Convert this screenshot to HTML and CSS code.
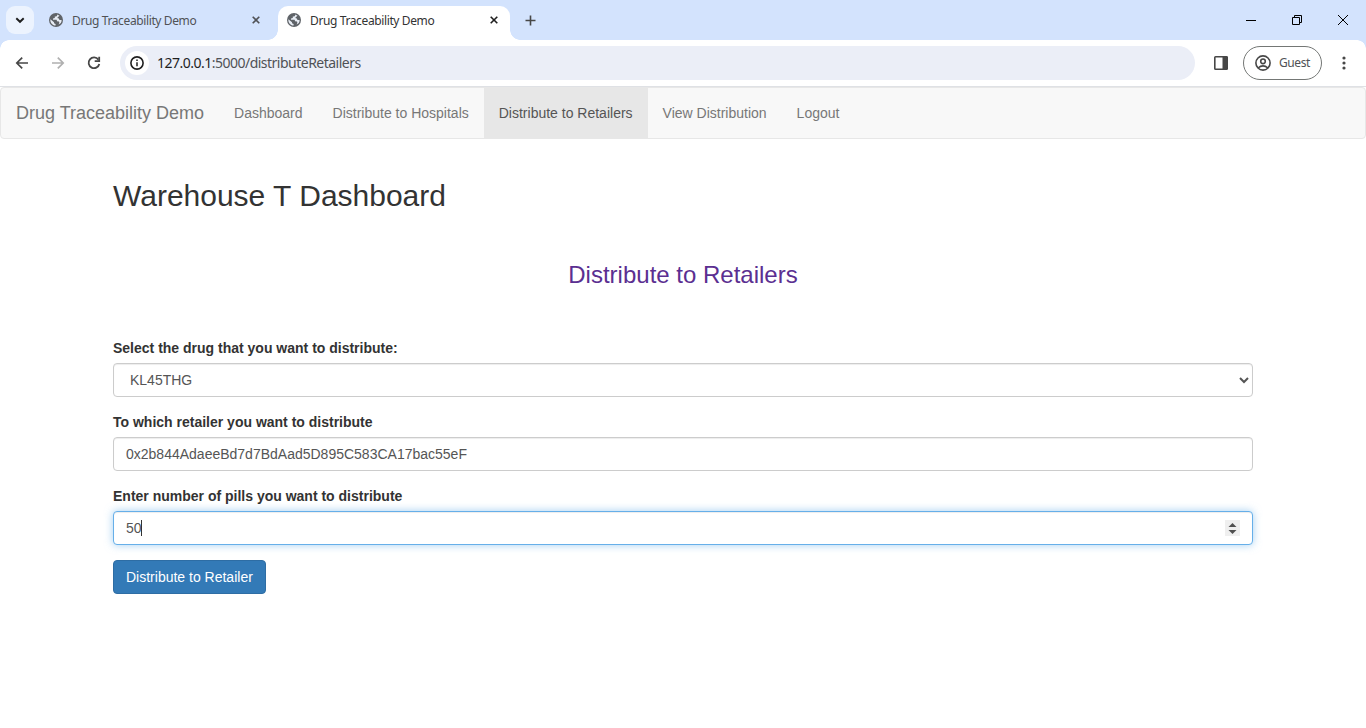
FILE: index.html
```html
<!DOCTYPE html>
<html lang="en">
<head>
<meta charset="utf-8">
<title>Drug Traceability Demo</title>
<link rel="stylesheet" href="styles.css">
</head>
<body>
<svg class="defs" width="0" height="0">
  <symbol id="globe" viewBox="0 0 14 14">
    <circle cx="7" cy="7" r="7" fill="#5f6368"/>
    <path d="M8.2 1.5 C8.5 3.2 7.2 3.5 5.8 3.6 V5.1 L4 5.5 V6.7 H7.2 C8 6.7 7.8 7.4 8 8.3 L10 8.5 L10.4 10 L9.5 11.6 C11.8 10.7 12.8 8.6 12.6 6.9 L10.5 7 L9.8 5.4 L8.2 5 L9.3 3.7 L10.5 2.7 Z" fill="#e8edf5"/>
    <path d="M1.4 6.2 L5 9.2 V10.3 L6.6 10.9 V12.6 C3.2 12.3 .9 9.2 1.4 6.2 Z" fill="#e8edf5"/>
  </symbol>
  <symbol id="close" viewBox="0 0 8 8"><path d="M.7 .7 L7.3 7.3 M7.3 .7 L.7 7.3" stroke="currentColor" stroke-width="1.6"/></symbol>
</svg>
<div class="tabstrip">
  <div class="tab-search"><svg width="28" height="28" viewBox="0 0 28 28"><path d="M10.3 12.2 L14 15.8 L17.7 12.2" fill="none" stroke="#1f1f1f" stroke-width="1.9"/></svg></div>
  <div class="tab">
    <svg class="favicon" width="14" height="14"><use href="#globe"/></svg>
    <span class="tab-title">Drug Traceability Demo</span>
    <svg class="tab-close" width="8" height="8"><use href="#close"/></svg>
  </div>
  <div class="tab active">
    <svg class="favicon" width="14" height="14"><use href="#globe"/></svg>
    <span class="tab-title">Drug Traceability Demo</span>
    <svg class="tab-close" width="8" height="8"><use href="#close"/></svg>
  </div>
  <svg class="new-tab" width="11" height="11" viewBox="0 0 11 11"><path d="M5.5 .5 V10.5 M.5 5.5 H10.5" stroke="#474747" stroke-width="1.6"/></svg>
  <div class="window-controls">
    <svg width="10" height="10" viewBox="0 0 10 10"><path d="M0 5.5 H10" stroke="#000"/></svg>
    <svg width="10" height="10" viewBox="0 0 10 10"><path d="M.5 2.5 H7.5 V9.5 H.5 Z M2.5 2.5 V.5 H9.5 V7.5 H7.5" fill="none" stroke="#000"/></svg>
    <svg width="10" height="10" viewBox="0 0 10 10"><path d="M0 0 L10 10 M10 0 L0 10" stroke="#000"/></svg>
  </div>
</div>
<div class="toolbar">
  <svg class="nav-icon" width="14" height="14" viewBox="0 0 14 14"><path d="M13 7 H2 M7.2 1.6 L1.8 7 L7.2 12.4" fill="none" stroke="#474747" stroke-width="1.7"/></svg>
  <svg class="nav-icon" width="14" height="14" viewBox="0 0 14 14"><path d="M1 7 H12 M6.8 1.6 L12.2 7 L6.8 12.4" fill="none" stroke="#b0b0b0" stroke-width="1.7"/></svg>
  <svg class="nav-icon" width="14" height="14" viewBox="0 0 14 14"><path d="M11.4 3.6 A5.4 5.4 0 1 0 12.3 8" fill="none" stroke="#474747" stroke-width="1.8"/><path d="M12.2 .8 V5.2 H7.7" fill="none" stroke="#474747" stroke-width="1.8"/></svg>
  <div class="address">
    <span class="site-info"><svg width="14" height="14" viewBox="0 0 14 14"><circle cx="7" cy="7" r="6.1" fill="none" stroke="#1f1f1f" stroke-width="1.6"/><path d="M7 6.2 V10.3 M7 3.6 V5.1" stroke="#1f1f1f" stroke-width="1.5"/></svg></span>
    <span class="url"><span class="host">127.0.0.1</span>:5000/distributeRetailers</span>
  </div>
  <svg class="side-panel" width="14" height="14" viewBox="0 0 14 14"><rect x=".8" y=".8" width="12.6" height="12.4" rx=".8" fill="#fff" stroke="#474747" stroke-width="1.6"/><path d="M8.5 1 H13.3 V13 H8.5 Z" fill="#474747"/></svg>
  <div class="profile">
    <svg width="16" height="16" viewBox="0 0 16 16"><g fill="none" stroke="#474747" stroke-width="1.6"><circle cx="8" cy="8" r="7.1"/><circle cx="8" cy="6.3" r="2.3"/><path d="M3 13 Q8 8.6 13 13"/></g></svg>
    <span>Guest</span>
  </div>
  <svg class="menu" width="4" height="14" viewBox="0 0 4 14"><g fill="#474747"><circle cx="2" cy="2" r="1.6"/><circle cx="2" cy="7" r="1.6"/><circle cx="2" cy="12" r="1.6"/></g></svg>
</div>
<nav class="navbar">
  <a class="brand">Drug Traceability Demo</a>
  <a class="nav-link">Dashboard</a>
  <a class="nav-link">Distribute to Hospitals</a>
  <a class="nav-link current">Distribute to Retailers</a>
  <a class="nav-link">View Distribution</a>
  <a class="nav-link">Logout</a>
</nav>
<main class="container">
  <h2>Warehouse T Dashboard</h2>
  <h3>Distribute to Retailers</h3>
  <form>
    <div class="group">
      <label for="drug">Select the drug that you want to distribute:</label>
      <select class="control select" id="drug"><option>KL45THG</option></select>
    </div>
    <div class="group">
      <label for="retailer">To which retailer you want to distribute</label>
      <input class="control" id="retailer" value="0x2b844AdaeeBd7d7BdAad5D895C583CA17bac55eF">
    </div>
    <div class="group">
      <label>Enter number of pills you want to distribute</label>
      <div class="control number"><span>50</span><i class="caret"></i>
        <svg class="spinner" width="15" height="16" viewBox="0 0 15 16"><rect width="15" height="16" fill="#efefef"/><path d="M3.5 7 L7.5 3 L11.5 7 Z M3.5 10 L7.5 14 L11.5 10 Z" fill="#505050"/></svg>
      </div>
    </div>
    <button class="submit" type="button">Distribute to Retailer</button>
  </form>
</main>
</body>
</html>
```
FILE: styles.css
```css
* { box-sizing: border-box; }
body { margin: 0; height: 728px; overflow: hidden; background: #fff; color: #333; font: 14px/20px "Liberation Sans", Arial, sans-serif; }
svg { display: block; flex: none; }
.defs { position: absolute; }

.tabstrip { height: 40px; display: flex; padding-left: 6px; background: #d3e3fd; font: 12px/16px "Noto Sans", sans-serif; }
.tab-search { width: 28px; height: 28px; margin-top: 6px; border-radius: 9px; background: #ecf3fe; }
.tab { width: 238px; height: 34px; margin: 6px 0 0 6px; display: flex; align-items: center; padding: 0 18px 6px 9px; color: #505256; }
.tab.active { position: relative; width: 232px; margin-left: 0; padding-right: 12px; background: #fff; border-radius: 10px 10px 0 0; color: #1f1f1f; }
.tab.active::before, .tab.active::after { content: ""; position: absolute; bottom: 0; width: 10px; height: 10px; }
.tab.active::before { left: -10px; background: radial-gradient(circle at 0 0, #d3e3fd 9.5px, #fff 10px); }
.tab.active::after { right: -10px; background: radial-gradient(circle at 100% 0, #d3e3fd 9.5px, #fff 10px); }
.tab-title { margin: 2px 0 0 9px; letter-spacing: -.38px; white-space: nowrap; }
.active .tab-title { color: #333; }
.tab-close { margin-left: auto; }
.new-tab { margin: 15px 0 0 14.5px; }
.window-controls { margin-left: auto; display: flex; gap: 36px; padding: 15px 18px 0 0; }

.toolbar { height: 47px; display: flex; align-items: center; padding: 0 20px 1px 15px; border-bottom: 1px solid #dfe1e5; font-family: "Noto Sans", sans-serif; background: radial-gradient(circle at 9px 9px, #fff 8.5px, #d3e3fd 9px) 0 0/9px 9px no-repeat, radial-gradient(circle at 0 9px, #fff 8.5px, #d3e3fd 9px) 100% 0/9px 9px no-repeat, #fff; }
.nav-icon { margin-right: 22px; }
.address { width: 1075px; height: 34px; margin-left: -3px; display: flex; align-items: center; padding-left: 5px; border-radius: 17px; background: #ebeef7; }
.site-info { width: 24px; height: 24px; display: grid; place-items: center; background: #fff; border-radius: 50%; }
.url { margin-left: 8px; color: #505256; font-size: 14px; letter-spacing: -.51px; }
.host { color: #1f1f1f; }
.side-panel { margin-left: 19px; }
.profile { width: 79px; height: 34px; margin-left: 15px; display: flex; align-items: center; gap: 8px; padding-left: 11px; border: 1px solid #747775; border-radius: 17px; color: #505256; font-size: 12px; letter-spacing: -.4px; }
.menu { margin-left: auto; }

.navbar { height: 52px; display: flex; background: #f8f8f8; border: 1px solid #e7e7e7; border-radius: 4px; color: #777; }
.brand { padding: 15px; font-size: 18px; white-space: nowrap; }
.nav-link { padding: 15px; white-space: nowrap; }
.current { background: #e7e7e7; color: #555; }

.container { width: 1140px; margin: 0 auto; padding-top: 40px; }
h2, h3 { margin: 0; font-weight: 400; line-height: 1.1; }
h2 { font-size: 30px; }
h3 { margin: 50px 0; color: #5b2f91; font-size: 24px; line-height: 26px; text-align: center; }
.group { margin-bottom: 15px; }
label { display: block; margin-bottom: 5px; font-weight: 700; }
.control { display: block; width: 100%; height: 34px; padding: 6px 12px; border: 1px solid #ccc; border-radius: 4px; background: #fff; color: #555; font: 14px/20px "Liberation Sans", Arial, sans-serif; box-shadow: inset 0 1px 1px rgba(0,0,0,.075); }
.number { display: flex; align-items: center; border-color: #66afe9; box-shadow: inset 0 1px 1px rgba(0,0,0,.075), 0 0 8px rgba(102,175,233,.6); }
.caret { width: 1px; height: 16px; margin-left: -1px; background: #333; }
.spinner { margin-left: auto; }
.submit { height: 34px; padding: 6px 12px; border: 1px solid #2e6da4; border-radius: 4px; background: #337ab7; color: #fff; font: 14px/20px "Liberation Sans", Arial, sans-serif; }
```
